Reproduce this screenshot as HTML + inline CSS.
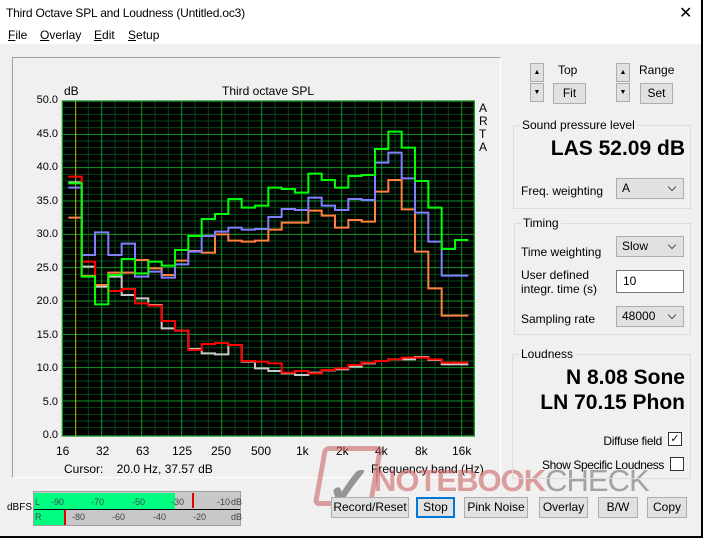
<!DOCTYPE html>
<html><head><meta charset="utf-8"><style>
*{margin:0;padding:0;box-sizing:border-box}
body{width:703px;height:538px;background:#f0f0f0;font-family:"Liberation Sans",sans-serif;font-size:12px;color:#000;position:relative;overflow:hidden}
.a{position:absolute}
.btn{position:absolute;background:#e1e1e1;border:1px solid #adadad;text-align:center;font-size:12px;line-height:18px}
.grp{position:absolute;border:1px solid #dcdcdc}
.grp>span{position:absolute;top:-8px;left:6px;background:#f0f0f0;padding:0 2px}
.cb{position:absolute;background:#e1e1e1;border:1px solid #adadad;height:21px;padding-left:5px;line-height:19px}
.cb:after{content:"";position:absolute;right:8px;top:5px;width:5px;height:5px;border-right:1px solid #555;border-bottom:1px solid #555;transform:rotate(45deg)}
.big{position:absolute;font-weight:bold;font-size:21px;text-align:right}
.u{text-decoration:underline}
</style></head><body>
<div class="a" style="left:0;top:0;width:703px;height:44px;background:#fff"></div>
<div class="a" style="left:6px;top:6px;font-size:12px;letter-spacing:-0.2px">Third Octave SPL and Loudness (Untitled.oc3)</div>
<div class="a" style="left:679px;top:3px;font-size:16px">✕</div>
<div class="a" style="left:8px;top:28px"><span class="u">F</span>ile</div>
<div class="a" style="left:40px;top:28px"><span class="u">O</span>verlay</div>
<div class="a" style="left:94px;top:28px"><span class="u">E</span>dit</div>
<div class="a" style="left:128px;top:28px"><span class="u">S</span>etup</div>
<div class="a" style="left:701px;top:0;width:2px;height:538px;background:#000"></div>
<div class="a" style="left:0;top:536px;width:703px;height:2px;background:#000"></div>

<div class="a" style="left:12px;top:57px;width:489px;height:421px;border:1px solid #a0a0a0;border-right-color:#fff;border-bottom-color:#fff"></div>
<div class="a" style="left:64px;top:84px">dB</div>
<div class="a" style="left:222px;top:84px">Third octave SPL</div>
<div class="a" style="left:479px;top:102px;line-height:13px;font-size:12px">A<br>R<br>T<br>A</div>
<div class="a" style="left:30px;top:84px;width:28px;text-align:right;line-height:33.5px;font-size:11px">50.0<br>45.0<br>40.0<br>35.0<br>30.0<br>25.0<br>20.0<br>15.0<br>10.0<br>5.0<br>0.0</div>
<svg class="a" style="left:55px;top:95px" width="430" height="350" viewBox="0 0 1290 1050">
<rect x="22" y="18" width="1236" height="1005" fill="#000"/>
<g stroke="#08461a" stroke-width="3">
<path d="M22 38H1258M22 58H1258M22 78H1258M22 98H1258M22 138H1258M22 158H1258M22 178H1258M22 198H1258M22 238H1258M22 258H1258M22 278H1258M22 298H1258M22 338H1258M22 358H1258M22 378H1258M22 398H1258M22 438H1258M22 458H1258M22 478H1258M22 498H1258M22 538H1258M22 558H1258M22 578H1258M22 598H1258M22 638H1258M22 658H1258M22 678H1258M22 698H1258M22 738H1258M22 758H1258M22 778H1258M22 798H1258M22 838H1258M22 858H1258M22 878H1258M22 898H1258M22 938H1258M22 958H1258M22 978H1258M22 998H1258"/>
<path d="M100 18V1023M180 18V1023M220 18V1023M300 18V1023M340 18V1023M420 18V1023M460 18V1023M540 18V1023M580 18V1023M660 18V1023M700 18V1023M780 18V1023M820 18V1023M900 18V1023M940 18V1023M1020 18V1023M1060 18V1023M1140 18V1023M1180 18V1023"/>
</g>
<g stroke="#149628" stroke-width="3">
<path d="M22 118H1258M22 218H1258M22 318H1258M22 418H1258M22 518H1258M22 618H1258M22 718H1258M22 818H1258M22 918H1258M140 18V1023M260 18V1023M380 18V1023M500 18V1023M620 18V1023M740 18V1023M860 18V1023M980 18V1023M1100 18V1023M1220 18V1023"/>
</g>
<rect x="22" y="18" width="1236" height="1005" fill="none" stroke="#149628" stroke-width="4"/>
<path d="M62 18V1023" stroke="#c8b400" stroke-width="3"/>
<g fill="none" stroke-width="6">
<polyline id="gray" stroke="#c8c8c8" points=""/>
<polyline id="red" stroke="#ff0000" points=""/>
<polyline id="orange" stroke="#ff8040" points=""/>
<polyline id="blue" stroke="#8080ff" points=""/>
<polyline id="green" stroke="#00ff00" points=""/>
</g>
</svg>
<div class="a" style="left:50px;top:444px;width:430px;font-size:12px">
<span class="a" style="left:6px">16</span><span class="a" style="left:46px">32</span><span class="a" style="left:86px">63</span><span class="a" style="left:122px">125</span><span class="a" style="left:161px">250</span><span class="a" style="left:201px">500</span><span class="a" style="left:246px">1k</span><span class="a" style="left:286px">2k</span><span class="a" style="left:325px">4k</span><span class="a" style="left:365px">8k</span><span class="a" style="left:402px">16k</span></div>
<div class="a" style="left:64px;top:462px">Cursor:&nbsp;&nbsp;&nbsp; 20.0 Hz, 37.57 dB</div>
<div class="a" style="left:371px;top:462px">Frequency band (Hz)</div>

<div class="a" style="left:7px;top:502px;font-size:10px">dBFS</div>
<div class="a" style="left:33px;top:491px;width:208px;height:35px;background:#c8c8c8;border:1px solid #a0a0a0"></div>
<div class="a" style="left:34px;top:493px;width:141px;height:16px;background:#00ff80"></div>
<div class="a" style="left:34px;top:510px;width:31px;height:15px;background:#00ff80"></div>
<div class="a" style="left:192px;top:493px;width:2px;height:15px;background:#e00000"></div>
<div class="a" style="left:64px;top:510px;width:2px;height:15px;background:#e00000"></div>
<div class="a" style="left:34px;top:509px;width:206px;height:1px;background:#000"></div>
<div class="a" style="left:35px;top:497px;font-size:9px;color:#444;width:205px;height:12px">
<span class="a" style="left:0">L</span><span class="a" style="left:16px">-90</span><span class="a" style="left:56px">-70</span><span class="a" style="left:97px">-50</span><span class="a" style="left:136px">-30</span><span class="a" style="left:182px">-10</span><span class="a" style="left:196px">dB</span></div>
<div class="a" style="left:35px;top:512px;font-size:9px;color:#444;width:205px;height:12px">
<span class="a" style="left:0">R</span><span class="a" style="left:37px">-80</span><span class="a" style="left:77px">-60</span><span class="a" style="left:118px">-40</span><span class="a" style="left:158px">-20</span><span class="a" style="left:196px">dB</span></div>

<div class="a" style="left:318px;top:446px;width:60px;height:60px;border:5px solid rgba(200,90,90,.55);transform:skewX(-10deg);border-radius:6px"></div>
<div class="a" style="left:326px;top:454px;font-size:56px;color:rgba(110,110,110,.7);font-weight:bold">✓</div>
<div class="a" style="left:374px;top:463px;font-size:31px;font-weight:bold;color:rgba(205,100,100,.6);letter-spacing:-1px">NOTEBOOK<span style="color:rgba(120,120,120,.65);font-weight:normal">CHECK</span></div>

<div class="btn" style="left:331px;top:497px;width:78px;height:21px">Record/Reset</div>
<div class="btn" style="left:416px;top:497px;width:39px;height:21px;border:2px solid #0078d7;line-height:17px">Stop</div>
<div class="btn" style="left:464px;top:497px;width:64px;height:21px">Pink Noise</div>
<div class="btn" style="left:539px;top:497px;width:49px;height:21px">Overlay</div>
<div class="btn" style="left:598px;top:497px;width:40px;height:21px">B/W</div>
<div class="btn" style="left:647px;top:497px;width:40px;height:21px">Copy</div>

<div class="btn" style="left:530px;top:63px;width:14px;height:19px;font-size:7px;line-height:17px">▲</div>
<div class="btn" style="left:530px;top:83px;width:14px;height:19px;font-size:7px;line-height:17px">▼</div>
<div class="a" style="left:558px;top:63px">Top</div>
<div class="btn" style="left:553px;top:83px;width:33px;height:21px">Fit</div>
<div class="btn" style="left:616px;top:63px;width:14px;height:19px;font-size:7px;line-height:17px">▲</div>
<div class="btn" style="left:616px;top:83px;width:14px;height:19px;font-size:7px;line-height:17px">▼</div>
<div class="a" style="left:639px;top:63px">Range</div>
<div class="btn" style="left:640px;top:83px;width:33px;height:21px">Set</div>

<div class="grp" style="left:513px;top:125px;width:178px;height:84px"><span>Sound pressure level</span></div>
<div class="big" style="left:520px;top:137px;width:165px">LAS 52.09 dB</div>
<div class="a" style="left:521px;top:184px">Freq. weighting</div>
<div class="cb" style="left:616px;top:178px;width:68px">A</div>
<div class="grp" style="left:514px;top:223px;width:177px;height:112px"><span>Timing</span></div>
<div class="a" style="left:521px;top:245px">Time weighting</div>
<div class="cb" style="left:616px;top:236px;width:68px">Slow</div>
<div class="a" style="left:521px;top:268px;line-height:14px">User defined<br>integr. time (s)</div>
<div class="a" style="left:616px;top:270px;width:68px;height:23px;background:#fff;border:1px solid #7a7a7a;padding:3px 6px">10</div>
<div class="a" style="left:521px;top:312px">Sampling rate</div>
<div class="cb" style="left:616px;top:306px;width:68px">48000</div>
<div class="grp" style="left:512px;top:354px;width:179px;height:125px"><span>Loudness</span></div>
<div class="big" style="left:520px;top:366px;width:165px">N 8.08 Sone</div>
<div class="big" style="left:520px;top:391px;width:165px">LN 70.15 Phon</div>
<div class="a" style="left:520px;top:434px;width:142px;text-align:right;letter-spacing:-0.3px">Diffuse field</div>
<div class="a" style="left:668px;top:432px;width:14px;height:14px;border:1px solid #333;background:#fff;font-size:11px;line-height:12px;text-align:center">✓</div>
<div class="a" style="left:500px;top:458px;width:164px;text-align:right;letter-spacing:-0.4px">Show Specific Loudness</div>
<div class="a" style="left:670px;top:457px;width:14px;height:14px;border:1px solid #333;background:#fff"></div>
<script>
var D={
green:[265,545,628,540,492,535,500,512,465,423,372,357,312,338,332,278,282,293,236,255,278,243,240,162,110,158,258,338,462,435],
blue:[278,480,412,480,446,545,530,548,508,470,423,410,398,404,402,366,342,345,308,332,345,312,315,203,173,250,353,440,542,542],
orange:[368,543,570,533,533,495,520,540,497,468,473,418,437,440,437,404,383,383,347,362,398,375,380,290,255,343,470,580,662,662],
red:[245,500,570,588,582,625,632,678,707,765,747,744,750,798,800,805,833,828,835,825,820,810,803,798,793,788,788,793,803,803],
gray:[262,515,575,545,600,610,630,700,707,762,775,778,750,800,820,828,835,840,833,826,823,815,805,798,793,793,786,795,808,808]};
for(var k in D){var p=[],a=D[k];for(var i=0;i<a.length;i++){var x0=40+40*i;p.push(x0+","+a[i]);p.push((x0+40)+","+a[i]);}
document.getElementById(k).setAttribute("points",p.join(" "));}
</script>
</body></html>
